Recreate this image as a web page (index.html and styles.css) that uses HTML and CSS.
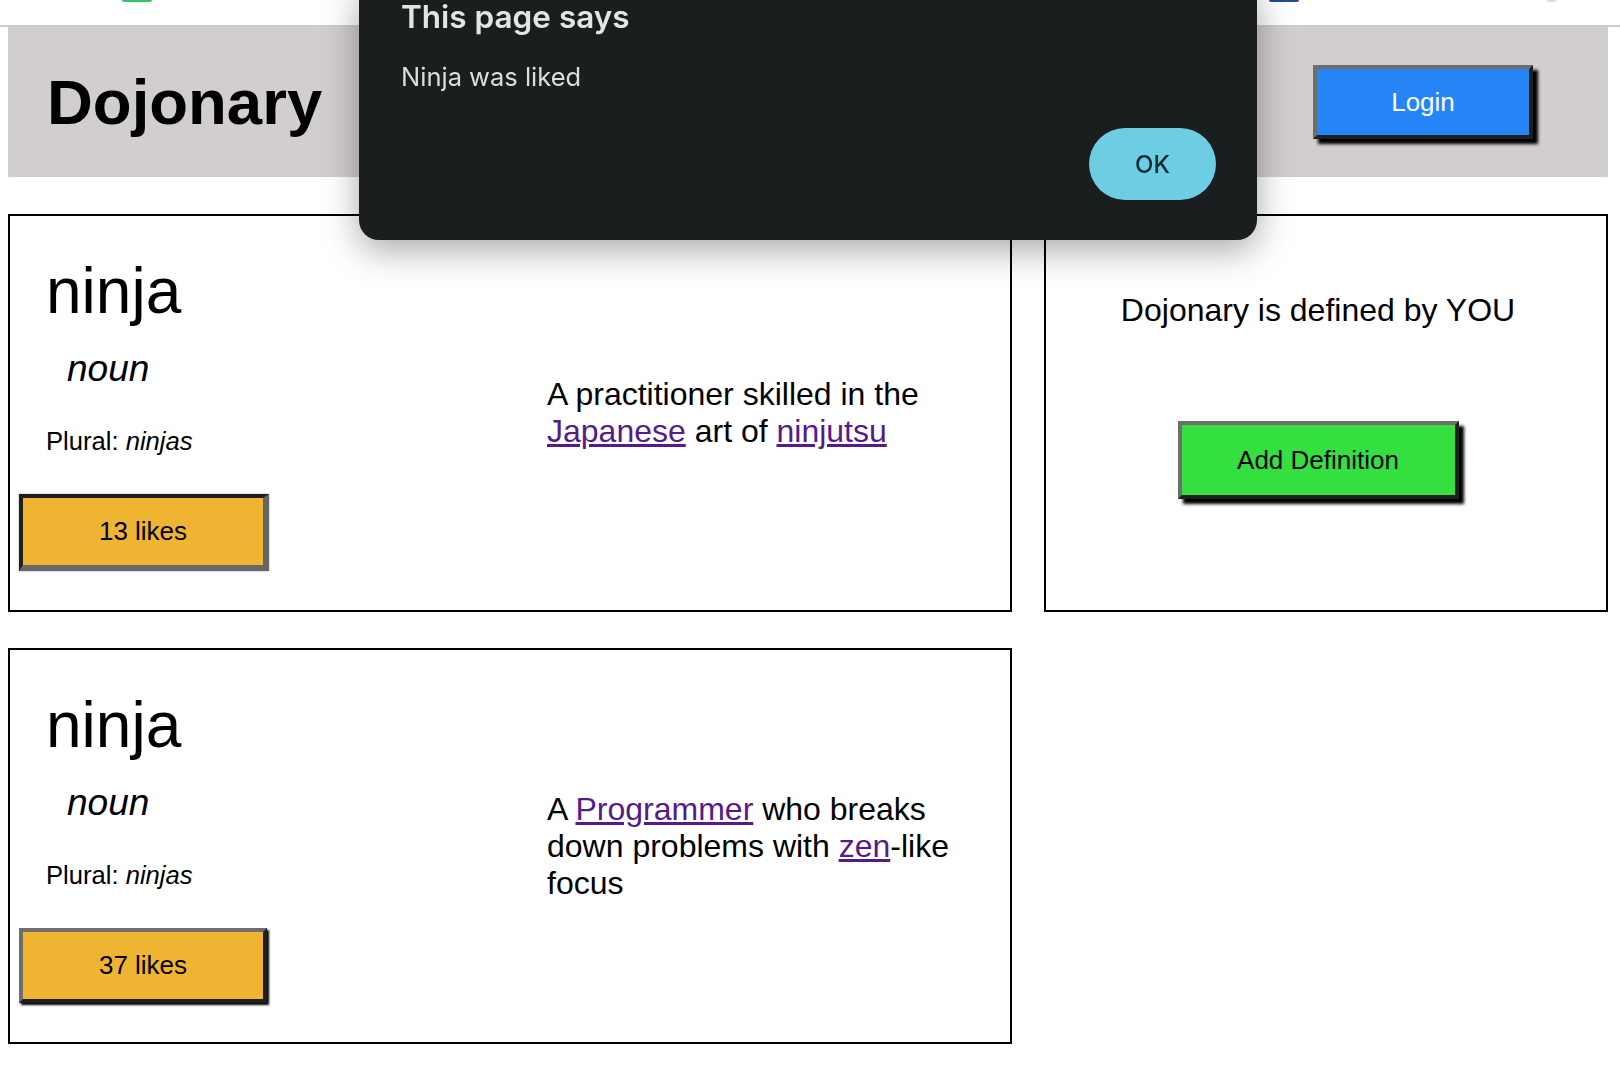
FILE: index.html
```html
<!DOCTYPE html>
<html lang="en">
<head>
<meta charset="utf-8">
<title>Dojonary</title>
<link rel="stylesheet" href="styles.css">
</head>
<body>
<div class="chrome">
  <span class="bm bm-green"></span>
  <span class="bm bm-blue"></span>
  <span class="bm bm-gray"></span>
</div>
<div class="page">
  <header class="topbar">
    <h1 class="brand">Dojonary</h1>
    <button class="btn btn-login">Login</button>
  </header>

  <div class="row">
    <section class="card word-card">
      <div class="word">
        <h2 class="word-title">ninja</h2>
        <h3 class="pos">noun</h3>
        <p class="plural">Plural: <em>ninjas</em></p>
        <button class="btn btn-like pressed">13 likes</button>
      </div>
      <div class="definition">
        <p>A practitioner skilled in the <a href="#">Japanese</a> art of <a href="#">ninjutsu</a></p>
      </div>
    </section>
    <aside class="card cta-card">
      <p class="cta-text">Dojonary is defined by YOU</p>
      <button class="btn btn-add">Add Definition</button>
    </aside>
  </div>

  <div class="row row-second">
    <section class="card word-card">
      <div class="word">
        <h2 class="word-title">ninja</h2>
        <h3 class="pos">noun</h3>
        <p class="plural">Plural: <em>ninjas</em></p>
        <button class="btn btn-like">37 likes</button>
      </div>
      <div class="definition">
        <p>A <a href="#">Programmer</a> who breaks down problems with <a href="#">zen</a>-like focus</p>
      </div>
    </section>
  </div>
</div>

<div class="dialog" role="alertdialog">
  <div class="dialog-title">This page says</div>
  <div class="dialog-msg">Ninja was liked</div>
  <div class="dialog-actions">
    <button class="dialog-ok">OK</button>
  </div>
</div>
</body>
</html>
```

FILE: styles.css
```css
* {
  box-sizing: border-box;
}

html, body {
  margin: 0;
  padding: 0;
  background: #ffffff;
}

body {
  font-family: "Liberation Sans", Arial, Helvetica, sans-serif;
  color: #000;
  overflow: hidden;
}

/* browser chrome remnant at the top */
.chrome {
  height: 27px;
  border-bottom: 2px solid #cbcbcb;
  display: flex;
  align-items: flex-start;
}

.bm {
  display: block;
  height: 2px;
  border-radius: 0 0 2px 2px;
}

.bm-green {
  margin-left: 122px;
  width: 30px;
  background: #35c46a;
}

.bm-blue {
  margin-left: 1117px;
  width: 30px;
  background: #1f4d9c;
}

.bm-gray {
  margin-left: 248px;
  width: 9px;
  background: #d4dbe3;
}

.page {
  width: 1600px;
  margin-left: 8px;
}

/* header */
.topbar {
  height: 150px;
  background: #d1cecd;
  display: flex;
  align-items: center;
  justify-content: space-between;
  padding: 0 75px 0 39px;
}

.brand {
  margin: 0;
  font-size: 63.5px;
  font-weight: bold;
}

/* buttons */
.btn {
  font-family: inherit;
  font-size: 26px;
  color: #000;
  border-style: solid;
  border-width: 4px;
  border-color: #6e6e6e #1f1f1f #1f1f1f #6e6e6e;
  padding: 0;
  cursor: pointer;
  display: block;
}

.btn-login {
  width: 220px;
  height: 74px;
  background: #2585f6;
  color: #fff;
  box-shadow: 5px 5px 3px #000;
}

.btn-like {
  width: 248px;
  height: 75px;
  margin-top: 38px;
  background: #f0b433;
  box-shadow: 2px 2px 2px #000;
}

.btn-like.pressed {
  width: 250px;
  height: 77px;
  border-width: 4px 6px 6px 4px;
  border-color: #1f1f1f #666666 #666666 #1f1f1f;
  box-shadow: 0 0 2px rgba(0, 0, 0, 0.35);
}

.btn-add {
  width: 281px;
  height: 78px;
  margin-top: 92px;
  background: #33e040;
  box-shadow: 5px 5px 3px #000;
}

/* rows and cards */
.row {
  display: flex;
  justify-content: space-between;
  align-items: stretch;
  margin-top: 37px;
}

.row-second {
  margin-top: 36px;
}

.card {
  border: 2px solid #000;
  background: #fff;
}

.word-card {
  width: 1004px;
  display: flex;
}

.word {
  flex: 0 0 500px;
  padding: 38px 0 39px 9px;
}

.word-title {
  margin: 0 0 0 27px;
  font-size: 64px;
  font-weight: normal;
}

.pos {
  margin: 20px 0 0 48px;
  font-size: 37px;
  font-weight: normal;
  font-style: italic;
}

.plural {
  margin: 37px 0 0 27px;
  font-size: 25.6px;
}

.definition {
  flex: 1;
  display: flex;
  align-items: center;
  padding: 0 37px;
}

.definition p {
  margin: 0;
  font-size: 32px;
}

.definition a {
  color: #551a8b;
  text-decoration: underline;
}

.cta-card {
  width: 564px;
  display: flex;
  flex-direction: column;
  align-items: center;
  padding: 76px 16px 0 0;
}

.cta-text {
  margin: 0;
  font-size: 32px;
}

/* alert dialog overlay */
.dialog {
  position: fixed;
  left: 359px;
  top: -20px;
  width: 898px;
  background: #1b1e1f;
  border-radius: 20px;
  padding: 21px 41px 40px 42px;
  box-shadow: 0 10px 36px rgba(0, 0, 0, 0.35);
  font-family: Inter, "Noto Sans", sans-serif;
  color: #e3e4e5;
}

.dialog-title {
  font-size: 31.5px;
  font-weight: 600;
  line-height: 32px;
}

.dialog-msg {
  margin-top: 28px;
  font-size: 25.5px;
  line-height: 32px;
  color: #dcdddd;
}

.dialog-actions {
  display: flex;
  justify-content: flex-end;
  margin-top: 35px;
}

.dialog-ok {
  width: 127px;
  height: 72px;
  border: none;
  border-radius: 36px;
  background: #6dcde2;
  color: #0d2b33;
  font-family: Inter, "Noto Sans", sans-serif;
  font-size: 24px;
  font-weight: 500;
  padding: 0;
}
```
